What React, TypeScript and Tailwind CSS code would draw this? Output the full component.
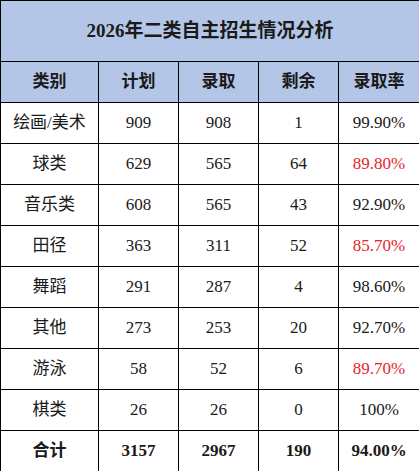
const rows = [
  { name: "绘画/美术", plan: 909, got: 908, left: 1, rate: "99.90%", red: false },
  { name: "球类", plan: 629, got: 565, left: 64, rate: "89.80%", red: true },
  { name: "音乐类", plan: 608, got: 565, left: 43, rate: "92.90%", red: false },
  { name: "田径", plan: 363, got: 311, left: 52, rate: "85.70%", red: true },
  { name: "舞蹈", plan: 291, got: 287, left: 4, rate: "98.60%", red: false },
  { name: "其他", plan: 273, got: 253, left: 20, rate: "92.70%", red: false },
  { name: "游泳", plan: 58, got: 52, left: 6, rate: "89.70%", red: true },
  { name: "棋类", plan: 26, got: 26, left: 0, rate: "100%", red: false },
];

const font = { fontFamily: '"Liberation Serif", "Noto Sans CJK SC", serif' };

const App = () => {
  return (
    <div className="w-[419px] h-[471px] bg-white" style={font}>
      <table className="w-[419px] border-collapse table-fixed text-[17px] text-[#1a1a1a]">
        <colgroup>
          <col className="w-[98px]" />
          <col className="w-[80px]" />
          <col className="w-[80px]" />
          <col className="w-[80px]" />
          <col className="w-[81px]" />
        </colgroup>
        <thead>
          <tr className="h-[61px] bg-[#b4c6e7]">
            <th colSpan={5} className="border border-black text-[19px] font-bold text-center">
              2026年二类自主招生情况分析
            </th>
          </tr>
          <tr className="h-[41px] bg-[#b4c6e7]">
            <th className="border border-black font-bold text-center">类别</th>
            <th className="border border-black font-bold text-center">计划</th>
            <th className="border border-black font-bold text-center">录取</th>
            <th className="border border-black font-bold text-center">剩余</th>
            <th className="border border-black font-bold text-center">录取率</th>
          </tr>
        </thead>
        <tbody>
          {rows.map((r) => (
            <tr key={r.name} className="h-[41px]">
              <td className="border border-black text-center">{r.name}</td>
              <td className="border border-black text-center">{r.plan}</td>
              <td className="border border-black text-center">{r.got}</td>
              <td className="border border-black text-center">{r.left}</td>
              <td className={"border border-black text-center " + (r.red ? "text-[#e8232b]" : "")}>
                {r.rate}
              </td>
            </tr>
          ))}
          <tr className="h-[41px] font-bold">
            <td className="border border-black text-center">合计</td>
            <td className="border border-black text-center">3157</td>
            <td className="border border-black text-center">2967</td>
            <td className="border border-black text-center">190</td>
            <td className="border border-black text-center">94.00%</td>
          </tr>
        </tbody>
      </table>
    </div>
  );
};

export default App;
